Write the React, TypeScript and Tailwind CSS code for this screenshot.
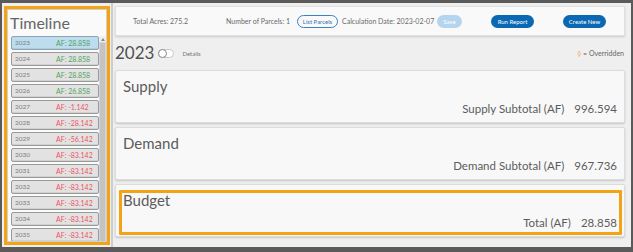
import React from "react";

const years = [
  { year: 2023, af: "28.858" },
  { year: 2024, af: "28.858" },
  { year: 2025, af: "28.858" },
  { year: 2026, af: "26.858" },
  { year: 2027, af: "-1.142" },
  { year: 2028, af: "-28.142" },
  { year: 2029, af: "-56.142" },
  { year: 2030, af: "-83.142" },
  { year: 2031, af: "-83.142" },
  { year: 2032, af: "-83.142" },
  { year: 2033, af: "-83.142" },
  { year: 2034, af: "-83.142" },
  { year: 2035, af: "-83.142" },
];

const font = { fontFamily: "Lato, 'Open Sans', sans-serif" };

const Section: React.FC<{ title: string; label: string; value: string; highlight?: boolean }> = (props) => {
  return (
    <div className="relative h-[53px] w-full bg-[#f8f8f8] border border-[#dcdcdc] rounded-[2px] shadow-[0_1px_2px_rgba(0,0,0,0.18)] flex flex-col justify-between pl-[7px] pr-[7px] pt-[6px] pb-[6px] text-[#5c5c5c]">
      <span className="text-[15px] leading-[18px]">{props.title}</span>
      <div className="flex justify-end items-center text-[11.5px] leading-[14px]">
        <span>{props.label}</span>
        <span className="ml-[10px]">{props.value}</span>
      </div>
      {props.highlight && (
        <div className="absolute left-[3px] right-[2px] top-[5px] bottom-[1px] border-[3px] border-[#f2a414] rounded-[1px]"></div>
      )}
    </div>
  );
};

export default function App() {
  return (
    <div
      className="w-[633px] h-[252px] bg-[#5a5a5a] pt-[3px] pb-[5px] pl-[2px] pr-[2px] overflow-hidden"
      style={font}
    >
      <div className="flex h-full bg-[#efefef]">
        {/* timeline sidebar */}
        <div className="w-[109px] h-full pl-[2px] pt-[3px] pb-[2px] shrink-0">
          <div className="h-full w-[106px] border-[3px] border-[#f2a414] bg-white">
            <div className="h-full border border-[#cfcfcf] bg-[#fafafa] flex flex-col">
              <div className="text-[16px] leading-[20px] text-[#666] pl-[2px] pt-[3px] h-[26px]">Timeline</div>
              <div className="flex flex-1 min-h-0">
                <div className="flex flex-col gap-[2px] pl-[3px] w-[92px] overflow-hidden">
                  {years.map((y, i) => {
                    const neg = y.af.startsWith("-");
                    return (
                      <div
                        key={y.year}
                        className={`h-[14px] shrink-0 flex items-center border rounded-[2px] pl-[3px] text-[6.5px] shadow-[inset_0_-1px_0_rgba(0,0,0,0.08)] ${
                          i === 0 ? "bg-[#bddcee] border-[#8aa4b8]" : "bg-[#e2e2e2] border-[#9a9a9a]"
                        }`}
                      >
                        <span className="w-[41px] text-[#808080]">{y.year}</span>
                        <span className={`text-[7px] ${neg ? "text-[#ef5565]" : "text-[#52a35e]"}`}>
                          AF: {y.af}
                        </span>
                      </div>
                    );
                  })}
                </div>
                <div className="w-[7px] ml-auto bg-[#d4d4d4] flex flex-col items-center">
                  <div className="h-[6px] w-full bg-[#f0f0f0] flex items-center justify-center">
                    <div className="w-0 h-0 border-l-[2px] border-r-[2px] border-b-[3px] border-l-transparent border-r-transparent border-b-[#888]"></div>
                  </div>
                  <div className="flex-1 w-[5px] bg-[#c4c4c4] mt-[1px]"></div>
                </div>
              </div>
            </div>
          </div>
        </div>

        {/* main area */}
        <div className="flex-1 h-full border-l-2 border-[#cdcdcd] pl-[2px] pr-[6px] pt-[3px] flex flex-col">
          <div className="h-[30px] w-full bg-[#f9f9f9] border border-[#e0e0e0] shadow-[0_1px_2px_rgba(0,0,0,0.15)] flex items-center text-[7px] text-[#6a6a6a] whitespace-nowrap">
            <span className="ml-[17px] w-[93px]">Total Acres: 275.2</span>
            <span className="w-[71px]">Number of Parcels: 1</span>
            <span className="h-[13px] w-[41px] rounded-full border border-[#3b82c0] text-[#2d74b4] text-[6px] flex items-center justify-center">
              List Parcels
            </span>
            <span className="ml-[4px] w-[95px]">Calculation Date: 2023-02-07</span>
            <span className="h-[13px] w-[25px] rounded-full bg-[#b5d5ee] text-white text-[6px] flex items-center justify-center">
              Save
            </span>
            <span className="ml-[29px] h-[13px] w-[43px] rounded-full bg-[#0b68b2] text-white text-[6px] flex items-center justify-center">
              Run Report
            </span>
            <span className="ml-[29px] h-[13px] w-[43px] rounded-full bg-[#0b68b2] text-white text-[6px] flex items-center justify-center">
              Create New
            </span>
          </div>

          <div className="h-[34px] flex items-center">
            <span className="text-[17px] leading-[20px] text-[#505050]">2023</span>
            <span className="ml-[4px] w-[16px] h-[9px] rounded-full border border-[#c8c8c8] bg-white relative">
              <span className="absolute left-[-1px] top-[-1px] w-[9px] h-[9px] rounded-full bg-white border border-[#888]"></span>
            </span>
            <span className="ml-[8px] text-[6px] text-[#777]">Details</span>
            <span className="ml-auto text-[7px] text-[#666] pr-[1px]">
              <span className="text-[#f2a05a]">◊</span> = Overridden
            </span>
          </div>

          <div className="flex flex-col gap-[4px]">
            <Section title="Supply" label="Supply Subtotal (AF)" value="996.594" />
            <Section title="Demand" label="Demand Subtotal (AF)" value="967.736" />
            <Section title="Budget" label="Total (AF)" value="28.858" highlight />
          </div>
        </div>
      </div>
    </div>
  );
}
